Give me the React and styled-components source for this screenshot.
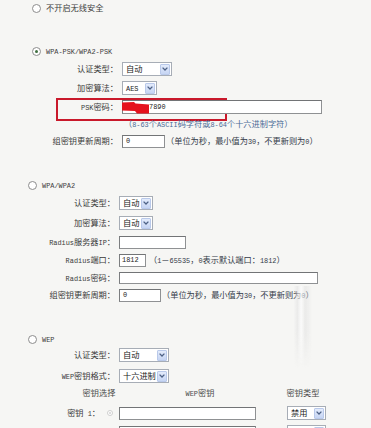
import React from "react";
import styled, { createGlobalStyle } from "styled-components";

const Global = createGlobalStyle`
  html, body { margin: 0; padding: 0; background: #f6f6f4; }
`;

const Page = styled.div`
  position: relative;
  width: 371px;
  height: 428px;
  overflow: hidden;
  background: #f6f6f4;
  color: #3c3c3c;
  font-family: "Noto Sans CJK SC", "Noto Sans", sans-serif;
  font-size: 8.2px;
  line-height: 1.2;
`;

const Latin = styled.span`
  font-family: "Liberation Mono", monospace;
  font-size: 6.9px;
  white-space: pre;
`;

function Tx({ s }) {
  return s
    .split(/([\x20-\x7E]+)/)
    .map((p, i) =>
      p === "" ? null : /^[\x20-\x7E]+$/.test(p) ? (
        <Latin key={i}>{p}</Latin>
      ) : (
        <React.Fragment key={i}>{p}</React.Fragment>
      )
    );
}

const Row = styled.div`
  position: relative;
  display: flex;
  align-items: center;
  height: 16px;
  margin-top: ${(p) => p.$mt || 0}px;
  padding-left: ${(p) => p.$indent || 0}px;
  white-space: nowrap;
`;

const Label = styled.div`
  flex-shrink: 0;
  width: ${(p) => p.$w}px;
  margin-right: 4px;
  text-align: right;
  color: #3a3a3a;
`;

const RadioDot = styled.span`
  position: relative;
  display: inline-block;
  box-sizing: border-box;
  width: ${(p) => p.$size || 9}px;
  height: ${(p) => p.$size || 9}px;
  border-radius: 50%;
  border: 1px solid ${(p) => (p.$faint ? "#cfcfcf" : "#8d8d8d")};
  background: #fff;
  flex-shrink: 0;
  margin-right: ${(p) => p.$mr ?? 5}px;
  margin-left: ${(p) => p.$ml || 0}px;
  &::after {
    content: "";
    display: ${(p) => (p.$checked ? "block" : "none")};
    position: absolute;
    left: 50%;
    top: 50%;
    width: ${(p) => (p.$faint ? 2 : 3)}px;
    height: ${(p) => (p.$faint ? 2 : 3)}px;
    margin: ${(p) => (p.$faint ? -1 : -1.5)}px 0 0 ${(p) => (p.$faint ? -1 : -1.5)}px;
    border-radius: 50%;
    background: ${(p) => (p.$faint ? "#d2d2d2" : "#3f6f3f")};
  }
`;

const RadioText = styled.span`
  color: #404040;
`;

const SelectBox = styled.div`
  display: inline-flex;
  align-items: center;
  box-sizing: border-box;
  width: ${(p) => p.$w}px;
  height: 14px;
  border: 1px solid #a7adb6;
  background: #fff;
  padding: 0 1px 0 3px;
  color: #222;
  flex-shrink: 0;
`;

const SelectValue = styled.span`
  flex: 1;
`;

const ArrowBtn = styled.span`
  display: inline-flex;
  align-items: center;
  justify-content: center;
  box-sizing: border-box;
  width: 10px;
  height: 11px;
  border: 1px solid #b9c9ea;
  border-radius: 1px;
  background: linear-gradient(#e3ebfb, #c6d5f3);
  flex-shrink: 0;
`;

function Select({ w, value }) {
  return (
    <SelectBox $w={w}>
      <SelectValue>{value ? <Tx s={value} /> : null}</SelectValue>
      <ArrowBtn>
        <svg width="6" height="4" viewBox="0 0 6 4">
          <path d="M0.6 0.6 L3 3 L5.4 0.6" fill="none" stroke="#4d6185" strokeWidth="1.3" />
        </svg>
      </ArrowBtn>
    </SelectBox>
  );
}

const Field = styled.div`
  position: relative;
  display: inline-flex;
  align-items: center;
  box-sizing: border-box;
  width: ${(p) => p.$w}px;
  height: ${(p) => p.$h || 13}px;
  border: 1px solid #8f9193;
  border-top-color: #727476;
  border-left-color: #7c7e80;
  background: #fff;
  padding-left: ${(p) => p.$pl ?? 3}px;
  color: #222;
  flex-shrink: 0;
`;

const Hint = styled.span`
  margin-left: ${(p) => p.$ml || 0}px;
  color: ${(p) => p.$color || "#333a48"};
`;

const Highlight = styled.div`
  position: absolute;
  left: 56px;
  top: -1px;
  width: 171px;
  height: 23px;
  box-sizing: border-box;
  border: 2px solid #c9192b;
  pointer-events: none;
`;

const Blob = styled.svg`
  position: absolute;
  left: -1px;
  top: 0px;
`;

const HeaderCell = styled.div`
  width: ${(p) => p.$w}px;
  text-align: center;
  color: #4a4a4a;
  flex-shrink: 0;
`;

const KeyLabel = styled.div`
  width: 100px;
  text-align: right;
  flex-shrink: 0;
  color: #3a3a3a;
`;

const Gap = styled.span`
  display: inline-block;
  width: ${(p) => p.$w}px;
  flex-shrink: 0;
`;

const Smear = styled.div`
  position: absolute;
  left: 294px;
  top: 286px;
  width: 18px;
  height: 82px;
  pointer-events: none;
  background: linear-gradient(
    to right,
    rgba(246, 246, 244, 0) 0%,
    rgba(225, 225, 225, 0.55) 18%,
    rgba(252, 252, 252, 0.7) 40%,
    rgba(225, 225, 225, 0.55) 62%,
    rgba(246, 246, 244, 0) 100%
  );
  -webkit-mask-image: linear-gradient(to bottom, #000 0%, #000 55%, transparent 100%);
  mask-image: linear-gradient(to bottom, #000 0%, #000 55%, transparent 100%);
`;

export default function App() {
  return (
    <>
      <Global />
      <Page>
        {/* 不开启无线安全 */}
        <Row $mt={0} $indent={32}>
          <RadioDot />
          <RadioText>不开启无线安全</RadioText>
        </Row>

        {/* WPA-PSK/WPA2-PSK */}
        <Row $mt={27} $indent={32}>
          <RadioDot $checked />
          <RadioText>
            <Tx s="WPA-PSK/WPA2-PSK" />
          </RadioText>
        </Row>
        <Row $mt={2}>
          <Label $w={118}>认证类型：</Label>
          <Select w={50} value="自动" />
        </Row>
        <Row $mt={3}>
          <Label $w={118}>加密算法：</Label>
          <Select w={35} value="AES" />
        </Row>
        <Row $mt={3}>
          <Highlight />
          <Label $w={118}>
            <Tx s="PSK密码：" />
          </Label>
          <Field $w={200} $h={14} $pl={26}>
            <Blob width="28" height="13" viewBox="0 0 28 13">
              <polygon
                points="0,1.5 12,1 13.5,2.5 27,3.5 27,12.5 15,12.5 13,10 0,9.5"
                fill="#e5121d"
              />
            </Blob>
            <Tx s="7890" />
          </Field>
        </Row>
        <Row $mt={1}>
          <Label $w={118} />
          <Hint $color="#4b6a96" $ml={2}>
            <Tx s="（8-63个ASCII码字符或8-64个十六进制字符）" />
          </Hint>
        </Row>
        <Row $mt={1}>
          <Label $w={118}>组密钥更新周期：</Label>
          <Field $w={43}>
            <Tx s="0" />
          </Field>
          <Hint $ml={1}>
            <Tx s="（单位为秒，最小值为30，不更新则为0）" />
          </Hint>
        </Row>

        {/* WPA/WPA2 */}
        <Row $mt={28} $indent={28}>
          <RadioDot />
          <RadioText>
            <Tx s="WPA/WPA2" />
          </RadioText>
        </Row>
        <Row $mt={2}>
          <Label $w={115}>认证类型：</Label>
          <Select w={34} value="自动" />
        </Row>
        <Row $mt={4}>
          <Label $w={115}>加密算法：</Label>
          <Select w={34} value="自动" />
        </Row>
        <Row $mt={3}>
          <Label $w={115}>
            <Tx s="Radius服务器IP：" />
          </Label>
          <Field $w={67} />
        </Row>
        <Row $mt={2}>
          <Label $w={115}>
            <Tx s="Radius端口：" />
          </Label>
          <Field $w={27} $pl={2}>
            <Tx s="1812" />
          </Field>
          <Hint $ml={3}>
            <Tx s="（1－65535，0表示默认端口：1812）" />
          </Hint>
        </Row>
        <Row $mt={2}>
          <Label $w={115}>
            <Tx s="Radius密码：" />
          </Label>
          <Field $w={199} $h={12} />
        </Row>
        <Row $mt={1}>
          <Label $w={115}>组密钥更新周期：</Label>
          <Field $w={42}>
            <Tx s="0" />
          </Field>
          <Hint $ml={1}>
            <Tx s="（单位为秒，最小值为30，不更新则为0）" />
          </Hint>
        </Row>

        {/* WEP */}
        <Row $mt={28} $indent={28}>
          <RadioDot />
          <RadioText>
            <Tx s="WEP" />
          </RadioText>
        </Row>
        <Row $mt={0}>
          <Label $w={115}>认证类型：</Label>
          <Select w={50} value="自动" />
        </Row>
        <Row $mt={5}>
          <Label $w={115}>
            <Tx s="WEP密钥格式：" />
          </Label>
          <Select w={50} value="十六进制" />
        </Row>
        <Row $mt={1}>
          <Gap $w={68} />
          <HeaderCell $w={62}>密钥选择</HeaderCell>
          <HeaderCell $w={140}>
            <Tx s="WEP密钥" />
          </HeaderCell>
          <HeaderCell $w={66}>密钥类型</HeaderCell>
        </Row>
        <Row $mt={4}>
          <KeyLabel>
            <Tx s="密钥 1：" />
          </KeyLabel>
          <RadioDot $size={6} $faint $checked $ml={7} $mr={6} />
          <Field $w={137} $h={13} />
          <Gap $w={31} />
          <Select w={39} value="禁用" />
        </Row>
        {/* next key row: only its top edge is inside the view */}
        <Row $mt={3}>
          <KeyLabel />
          <RadioDot $size={6} $faint $ml={7} $mr={6} />
          <Field $w={137} $h={13} />
          <Gap $w={31} />
          <Select w={39} />
        </Row>

        <Smear />
      </Page>
    </>
  );
}
